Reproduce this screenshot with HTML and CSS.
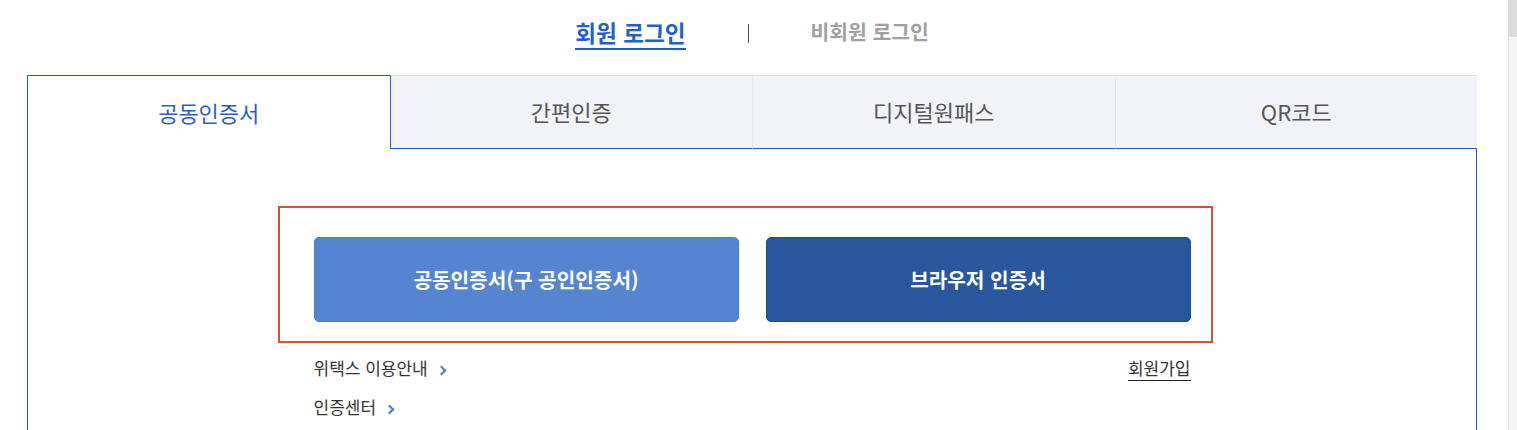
FILE: index.html
```html
<!DOCTYPE html>
<html lang="ko">
<head>
<meta charset="utf-8">
<title>로그인</title>
<link rel="stylesheet" href="styles.css">
</head>
<body>
<div class="wrap">
  <div class="login-type">
    <a class="type on" href="#">회원 로그인</a>
    <span class="sep"></span>
    <a class="type" href="#">비회원 로그인</a>
  </div>
  <ul class="tabs">
    <li class="tab on">공동인증서</li>
    <li class="tab">간편인증</li>
    <li class="tab">디지털원패스</li>
    <li class="tab">QR코드</li>
  </ul>
  <div class="panel">
    <div class="inner">
      <div class="btns">
        <a class="btn btn-light" href="#">공동인증서(구 공인인증서)</a>
        <a class="btn btn-dark" href="#">브라우저 인증서</a>
        <span class="mark"></span>
      </div>
      <div class="links">
        <ul class="guide">
          <li><a href="#">위택스 이용안내<span class="chev"></span></a></li>
          <li><a href="#">인증센터<span class="chev"></span></a></li>
        </ul>
        <a class="join" href="#">회원가입</a>
      </div>
    </div>
  </div>
</div>
<div class="scrollbar"><div class="thumb"></div></div>
</body>
</html>
```
FILE: styles.css
```css
* { box-sizing: border-box; }
html, body { margin: 0; padding: 0; background: #fff; overflow: hidden; }
body {
  font-family: "Noto Sans CJK KR", "Noto Sans", sans-serif;
  color: #333;
  width: 1517px;
  height: 430px;
}
a { text-decoration: none; color: inherit; }
ul { list-style: none; margin: 0; padding: 0; }

.wrap { margin-left: 27px; width: 1450px; }

.login-type {
  height: 75px;
  display: flex;
  justify-content: center;
  align-items: flex-start;
}
.type {
  margin-top: 15px;
  font-weight: 700;
  font-size: 20.4px;
  line-height: 32px;
  color: #a0a0a0;
}
.type.on {
  color: #1f5fcf;
  font-size: 22.6px;
  border-bottom: 2px solid #1a5fd6;
  line-height: 31px;
  margin-top: 17px;
}
.sep {
  width: 1px;
  height: 19px;
  background: #555;
  margin: 24px 62px 0;
}

.tabs {
  display: flex;
  height: 74px;
}
.tab {
  flex: 1;
  display: flex;
  align-items: center;
  justify-content: center;
  font-size: 22px;
  color: #555;
  background: #f2f3f7;
  border-top: 1px solid #e1e1e1;
  border-left: 1px solid #e6e6e6;
  border-bottom: 1px solid #2259be;
  padding-bottom: 2px;
}
.tab:nth-child(2) { border-left: 0; }
.tab.on {
  background: #fff;
  color: #2a5fbd;
  border: 1px solid #2259be;
  border-bottom: 0;
}

.panel {
  border-left: 1px solid #2259be;
  border-right: 1px solid #2259be;
  height: 300px;
  padding-top: 88px;
}
.inner { width: 877px; margin: 0 auto; }

.btns {
  position: relative;
  display: flex;
  gap: 27px;
}
.btn {
  flex: 1;
  height: 85px;
  border-radius: 5px;
  display: flex;
  align-items: center;
  justify-content: center;
  color: #fff;
  font-size: 20.2px;
  font-weight: 700;
}
.btn-light { background: #5585d0; border: 1px solid #4a7acb; }
.btn-dark { background: #28569f; border: 1px solid #1d4a98; }
.mark {
  position: absolute;
  left: -36px;
  top: -31px;
  width: 935px;
  height: 137px;
  border: 2px solid #d65331;
}

.links {
  display: flex;
  justify-content: space-between;
  align-items: flex-start;
  margin-top: 31px;
}
.guide li {
  font-size: 17px;
  line-height: 30px;
  height: 39px;
}
.chev {
  display: inline-block;
  width: 7px;
  height: 7px;
  border-top: 2px solid #4a7bd0;
  border-right: 2px solid #4a7bd0;
  transform: rotate(45deg);
  margin-left: 10px;
  vertical-align: 1px;
}
.join {
  font-size: 17px;
  line-height: 24px;
  border-bottom: 1px solid #222;
  margin-top: 3px;
}

.scrollbar {
  position: absolute;
  top: 0;
  right: 0;
  width: 9px;
  height: 430px;
  background: #f5f5f5;
  border-left: 1px solid #dcdcdc;
}
.thumb { height: 37px; background: #dcdcdc; }
```
